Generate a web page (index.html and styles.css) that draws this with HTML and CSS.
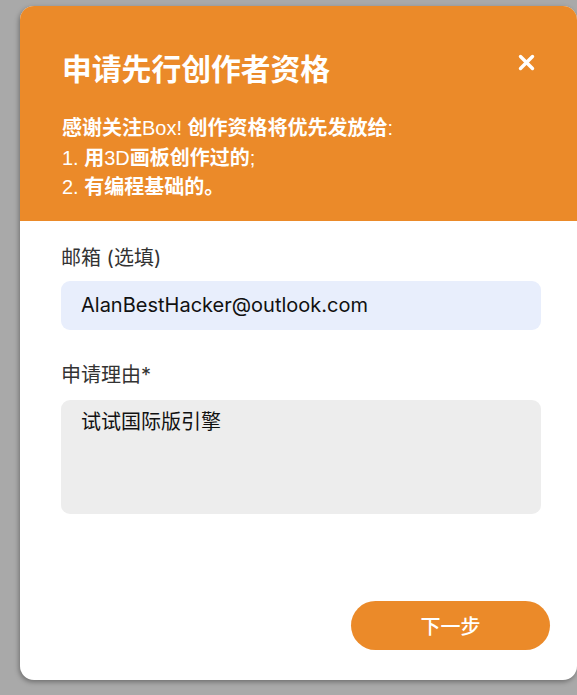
FILE: index.html
```html
<!DOCTYPE html>
<html lang="zh-CN">
<head>
<meta charset="utf-8">
<title>申请先行创作者资格</title>
<link rel="stylesheet" href="styles.css">
</head>
<body>
<div class="dialog">
  <div class="header">
    <h1 class="title">申请先行创作者资格</h1>
    <div class="intro">
      <div>感谢关注<span class="lt">Box!</span> 创作资格将优先发放给<span class="lt">:</span></div>
      <div><span class="lt">1.</span> 用<span class="lt">3D</span>画板创作过的<span class="lt">;</span></div>
      <div><span class="lt">2.</span> 有编程基础的。</div>
    </div>
    <button class="close" aria-label="关闭">
      <svg width="17" height="17" viewBox="0 0 17 17"><path d="M2.5 2.5 L14.5 14.5 M14.5 2.5 L2.5 14.5" stroke="#fff" stroke-width="3.4" stroke-linecap="round"/></svg>
    </button>
  </div>
  <div class="body">
    <div class="label">邮箱 (选填)</div>
    <div class="field email">AlanBestHacker@outlook.com</div>
    <div class="label second">申请理由*</div>
    <div class="field reason">试试国际版引擎</div>
    <div class="actions">
      <button class="next">下一步</button>
    </div>
  </div>
</div>
</body>
</html>
```
FILE: styles.css
```css
html, body {
  margin: 0;
  padding: 0;
}
body {
  background: #a9a9a9;
  width: 577px;
  height: 695px;
  overflow: hidden;
  padding-top: 6px;
  box-sizing: border-box;
}
.dialog {
  position: relative;
  margin-left: 20px;
  width: 557px;
  height: 674px;
  background: #fff;
  border-radius: 14px;
  overflow: hidden;
  box-shadow: -1px 2px 5px rgba(0,0,0,0.35);
  font-family: "Inter", "Noto Sans CJK SC", sans-serif;
}
.header {
  background: #eb8a29;
  color: #fff;
  padding: 46px 40px 18px 42px;
  height: 215px;
  box-sizing: border-box;
}
.title {
  margin: 0;
  font-family: "Liberation Sans", "Noto Sans CJK SC", sans-serif;
  font-size: 29.8px;
  line-height: 36px;
  font-weight: 700;
}
.intro {
  margin-top: 26px;
  font-family: "Liberation Sans", "Noto Sans CJK SC", sans-serif;
  font-size: 20px;
  line-height: 29.5px;
  font-weight: 700;
}
.intro .lt {
  font-weight: 400;
}
.close {
  position: absolute;
  top: 48px;
  right: 42px;
  padding: 0;
  border: 0;
  background: none;
  width: 17px;
  height: 17px;
  display: flex;
  cursor: pointer;
}
.body {
  padding: 23px 36px 0 41px;
}
.label {
  font-size: 20px;
  line-height: 28px;
  color: #333;
  margin-bottom: 9px;
}
.label.second {
  margin-top: 31px;
  margin-bottom: 11px;
}
.field {
  border-radius: 9px;
  padding: 0 20px;
  font-size: 20px;
  color: #111;
}
.email {
  background: #e8eefc;
  height: 49px;
  line-height: 49px;
}
.reason {
  background: #ededed;
  height: 114px;
  box-sizing: border-box;
  padding-top: 8px;
  line-height: 28px;
}
.actions {
  display: flex;
  justify-content: flex-end;
  margin-top: 87px;
  margin-right: -9px;
}
.next {
  width: 199px;
  height: 49px;
  border: 0;
  border-radius: 25px;
  background: #eb8a29;
  color: #fff;
  font-family: "Noto Sans CJK SC", sans-serif;
  font-size: 20px;
  font-weight: 500;
  cursor: pointer;
}
```
